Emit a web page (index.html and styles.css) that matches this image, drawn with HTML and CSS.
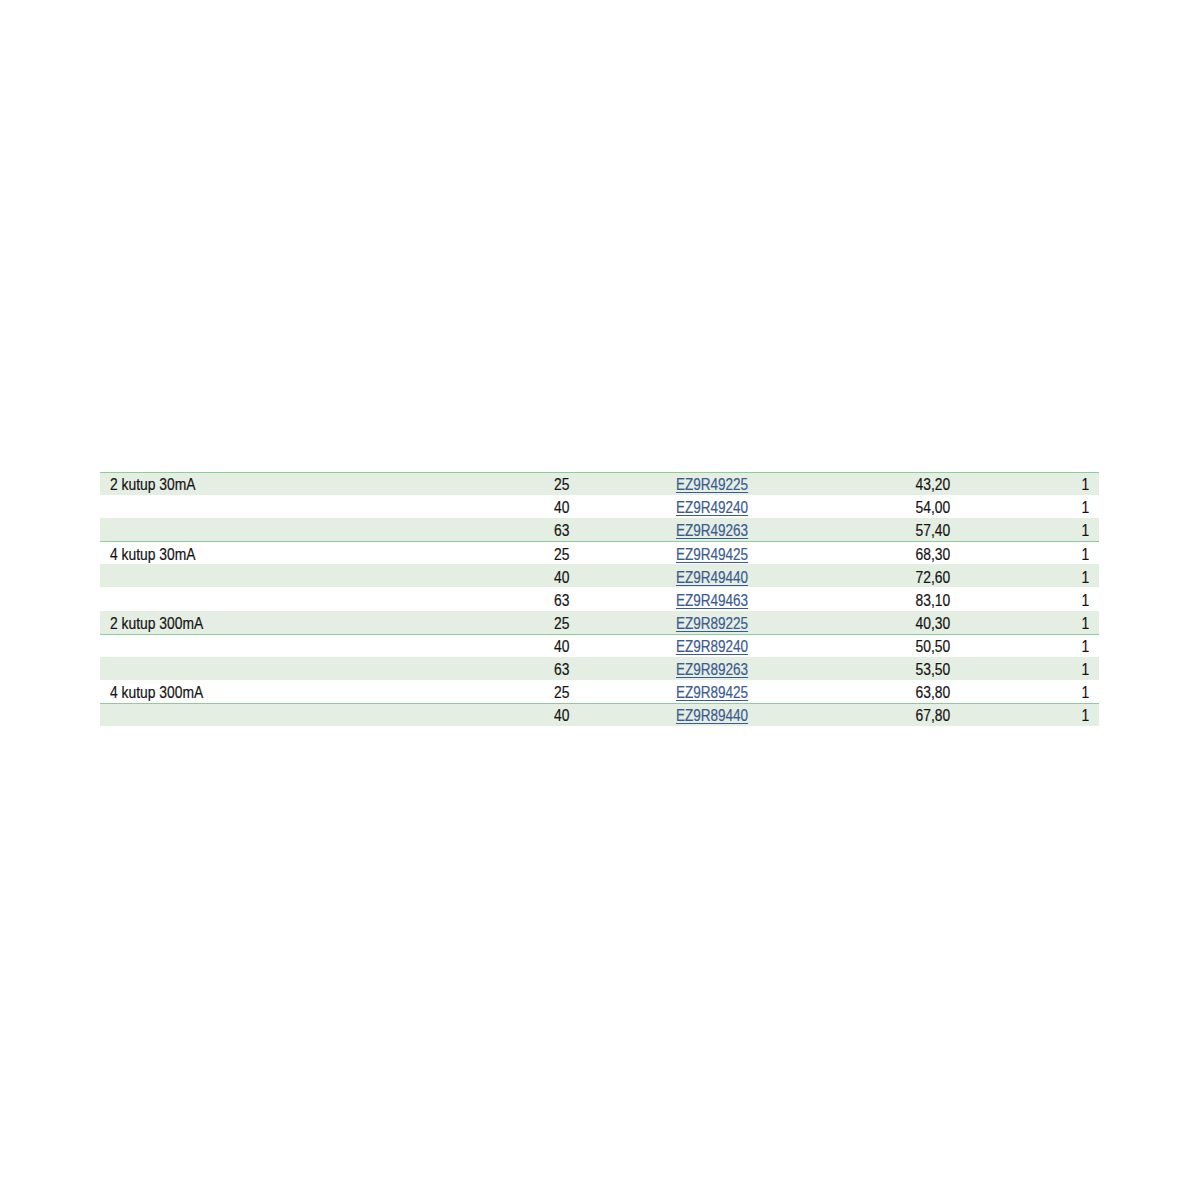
FILE: index.html
```html
<!DOCTYPE html>
<html lang="tr">
<head>
<meta charset="utf-8">
<title>Tablo</title>
<link rel="stylesheet" href="styles.css">
</head>
<body>
<div class="page">
  <div class="table">
    <div class="row shade line"><div class="c1"><span>2 kutup 30mA</span></div><div class="c2"><span>25</span></div><div class="c3"><a href="#">EZ9R49225</a></div><div class="c4"><span>43,20</span></div><div class="c5"><span>1</span></div></div>
    <div class="row"><div class="c1"></div><div class="c2"><span>40</span></div><div class="c3"><a href="#">EZ9R49240</a></div><div class="c4"><span>54,00</span></div><div class="c5"><span>1</span></div></div>
    <div class="row shade"><div class="c1"></div><div class="c2"><span>63</span></div><div class="c3"><a href="#">EZ9R49263</a></div><div class="c4"><span>57,40</span></div><div class="c5"><span>1</span></div></div>
    <div class="row line"><div class="c1"><span>4 kutup 30mA</span></div><div class="c2"><span>25</span></div><div class="c3"><a href="#">EZ9R49425</a></div><div class="c4"><span>68,30</span></div><div class="c5"><span>1</span></div></div>
    <div class="row shade"><div class="c1"></div><div class="c2"><span>40</span></div><div class="c3"><a href="#">EZ9R49440</a></div><div class="c4"><span>72,60</span></div><div class="c5"><span>1</span></div></div>
    <div class="row"><div class="c1"></div><div class="c2"><span>63</span></div><div class="c3"><a href="#">EZ9R49463</a></div><div class="c4"><span>83,10</span></div><div class="c5"><span>1</span></div></div>
    <div class="row shade"><div class="c1"><span>2 kutup 300mA</span></div><div class="c2"><span>25</span></div><div class="c3"><a href="#">EZ9R89225</a></div><div class="c4"><span>40,30</span></div><div class="c5"><span>1</span></div></div>
    <div class="row line"><div class="c1"></div><div class="c2"><span>40</span></div><div class="c3"><a href="#">EZ9R89240</a></div><div class="c4"><span>50,50</span></div><div class="c5"><span>1</span></div></div>
    <div class="row shade"><div class="c1"></div><div class="c2"><span>63</span></div><div class="c3"><a href="#">EZ9R89263</a></div><div class="c4"><span>53,50</span></div><div class="c5"><span>1</span></div></div>
    <div class="row"><div class="c1"><span>4 kutup 300mA</span></div><div class="c2"><span>25</span></div><div class="c3"><a href="#">EZ9R89425</a></div><div class="c4"><span>63,80</span></div><div class="c5"><span>1</span></div></div>
    <div class="row shade line"><div class="c1"></div><div class="c2"><span>40</span></div><div class="c3"><a href="#">EZ9R89440</a></div><div class="c4"><span>67,80</span></div><div class="c5"><span>1</span></div></div>
  </div>
</div>
</body>
</html>
```
FILE: styles.css
```css
html, body {
  margin: 0;
  padding: 0;
  background: #ffffff;
}
.page {
  padding: 472px 101px 0 100px;
  font-family: "Liberation Sans", Arial, sans-serif;
  font-size: 16.5px;
  color: #141414;
}
.table {
  display: flex;
  flex-direction: column;
}
.row {
  display: grid;
  grid-template-columns: 379px 100px 267px 114px 139px;
  height: 23.1px;
  box-sizing: border-box;
  align-items: center;
  line-height: 1;
  padding-top: 2px;
}
.row.shade {
  background: #e5eee3;
}
.row.line {
  border-top: 1px solid #8fcc9c;
  padding-top: 1px;
}
.row span,
.row a {
  display: inline-block;
  transform: scaleX(0.84);
  -webkit-text-stroke: 0.2px currentColor;
}
.c1 {
  padding-left: 10px;
}
.c1 span {
  transform-origin: left center;
}
.c2, .c4, .c5 {
  text-align: right;
  padding-right: 10px;
}
.c2 span, .c4 span, .c5 span {
  transform-origin: right center;
}
.c3 {
  text-align: center;
}
.c3 a {
  transform: scaleX(0.82);
  transform-origin: center center;
  color: #3b5b90;
  text-decoration: underline;
  text-underline-offset: 2px;
}
```
